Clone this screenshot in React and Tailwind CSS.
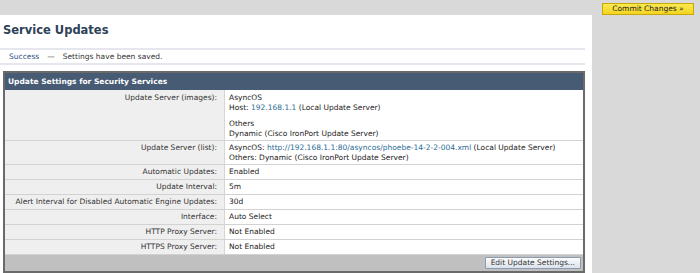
import React from 'react';

const rows = [
  { label: 'Automatic Updates:', value: 'Enabled' },
  { label: 'Update Interval:', value: '5m' },
  { label: 'Alert Interval for Disabled Automatic Engine Updates:', value: '30d' },
  { label: 'Interface:', value: 'Auto Select' },
  { label: 'HTTP Proxy Server:', value: 'Not Enabled' },
  { label: 'HTTPS Proxy Server:', value: 'Not Enabled' },
];

function Row({ label, children, pad = 'py-[2px]' }) {
  return (
    <div className="grid grid-cols-[220px_1fr] border-b border-[#d2d2d2]">
      <div className={`bg-[#efefef] text-right pr-[7px] text-[#333] border-r border-[#d6d6d6] ${pad}`}>{label}</div>
      <div className={`bg-white pl-[4px] text-[#222] ${pad}`}>{children}</div>
    </div>
  );
}

export default function App() {
  return (
    <div className="w-[700px] h-[273px] flex bg-[#d9d9d9] overflow-hidden font-['DejaVu_Sans',Verdana,sans-serif] text-[7.5px] leading-[10px]">
      <div className="w-[592px] flex flex-col">
        <div className="h-[15px] shrink-0" />
        <div className="flex-1 bg-white">
          <div className="h-[33px] pt-[8px] pl-[3px]">
            <h1 className="text-[11.5px] leading-[14px] font-bold text-[#2d4259]">Service Updates</h1>
          </div>
          <div className="w-[585px] h-[17px] border-y-2 border-[#e6e7ee] pl-[9px] flex items-center">
            <span className="text-[#2c5282]">Success</span>
            <span className="mx-[8px] text-[#333]">—</span>
            <span className="text-[#333]">Settings have been saved.</span>
          </div>
          <div className="mt-[6px] ml-[3px] w-[582px] border-2 border-[#6a6a6a]">
            <div className="h-[17px] bg-[#475b74] text-white font-bold pl-[3px] flex items-center">
              Update Settings for Security Services
            </div>
            <Row label="Update Server (images):" pad="pt-[3px] pb-[1px]">
              <div>AsyncOS</div>
              <div>
                Host: <span className="text-[#2a6c96]">192.168.1.1</span> (Local Update Server)
              </div>
              <div className="mt-[6px]">Others</div>
              <div>Dynamic (Cisco IronPort Update Server)</div>
            </Row>
            <Row label="Update Server (list):" pad="pt-[2px] pb-[1px]">
              <div>
                AsyncOS: <span className="text-[#2a6c96]">http://192.168.1.1:80/asyncos/phoebe-14-2-2-004.xml</span> (Local Update Server)
              </div>
              <div>Others: Dynamic (Cisco IronPort Update Server)</div>
            </Row>
            {rows.map((r) => (
              <Row key={r.label} label={r.label}>
                {r.value}
              </Row>
            ))}
            <div className="h-[16px] bg-[#c0c0c0] flex items-center justify-end pr-[2px]">
              <button className="h-[12px] px-[5px] border border-[#8d9bb0] rounded-[1px] bg-gradient-to-b from-[#fbfcfd] to-[#dde3ec] text-[#333] leading-[10px]">
                Edit Update Settings...
              </button>
            </div>
          </div>
        </div>
      </div>
      <div className="flex-1 pt-[3px] pl-[10px]">
        <button className="w-[92px] h-[12px] border border-[#c9a90a] bg-gradient-to-b from-[#fbe94e] to-[#f3d41c] text-[#222] leading-[10px]">
          Commit Changes »
        </button>
      </div>
    </div>
  );
}
